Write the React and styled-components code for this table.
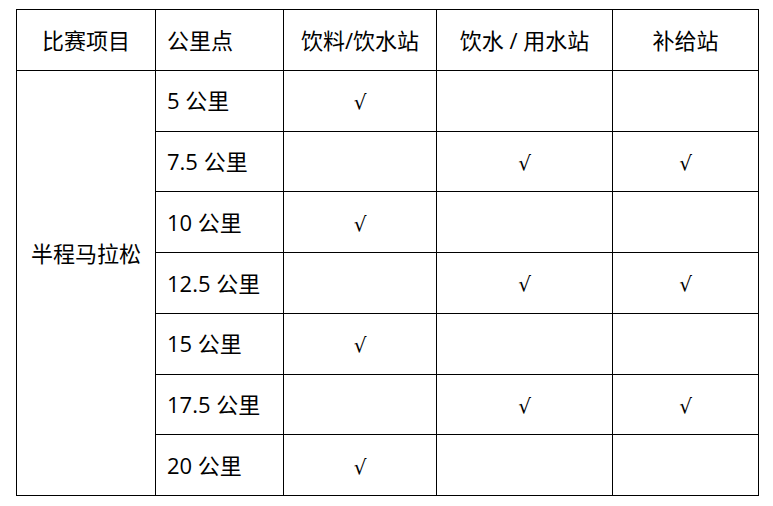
import React from 'react';
import styled, { createGlobalStyle } from 'styled-components';

const GlobalStyle = createGlobalStyle`
  html, body {
    margin: 0;
    padding: 0;
    background: #ffffff;
  }
  body {
    font-family: "Open Sans", "Noto Sans CJK SC", sans-serif;
    color: #000;
  }
`;

const Page = styled.div`
  padding: 9px 15px 0 16px;
`;

const Table = styled.table`
  border-collapse: collapse;
  width: 742px;
  table-layout: fixed;
  font-size: 22px;
`;

const Row = styled.tr`
  height: 60.75px;
`;

const Cell = styled.td`
  border: 1px solid #000;
  padding: 0 0 0 ${p => (p.$left ? '11px' : '0')};
  text-align: ${p => (p.$left ? 'left' : 'center')};
  vertical-align: middle;
  line-height: 1.2;
  font-weight: 400;
`;

const GroupCell = styled(Cell)`
  padding-bottom: 60px;
`;

const HeadCell = styled(Cell).attrs({ as: 'th' })``;

const Check = styled.span`
  font-family: "DejaVu Sans", sans-serif;
  font-size: 20px;
`;

const columns = [139, 128, 153, 176, 146];

const rows = [
  { km: '5 公里', drink: true, water: false, supply: false },
  { km: '7.5 公里', drink: false, water: true, supply: true },
  { km: '10 公里', drink: true, water: false, supply: false },
  { km: '12.5 公里', drink: false, water: true, supply: true },
  { km: '15 公里', drink: true, water: false, supply: false },
  { km: '17.5 公里', drink: false, water: true, supply: true },
  { km: '20 公里', drink: true, water: false, supply: false },
];

const mark = v => (v ? <Check>√</Check> : null);

export default function App() {
  return (
    <>
      <GlobalStyle />
      <Page>
        <Table>
          <colgroup>
            {columns.map((w, i) => (
              <col key={i} style={{ width: w }} />
            ))}
          </colgroup>
          <thead>
            <Row>
              <HeadCell>比赛项目</HeadCell>
              <HeadCell $left>公里点</HeadCell>
              <HeadCell>饮料/饮水站</HeadCell>
              <HeadCell>饮水 / 用水站</HeadCell>
              <HeadCell>补给站</HeadCell>
            </Row>
          </thead>
          <tbody>
            {rows.map((r, i) => (
              <Row key={r.km}>
                {i === 0 && <GroupCell rowSpan={rows.length}>半程马拉松</GroupCell>}
                <Cell $left>{r.km}</Cell>
                <Cell>{mark(r.drink)}</Cell>
                <Cell>{mark(r.water)}</Cell>
                <Cell>{mark(r.supply)}</Cell>
              </Row>
            ))}
          </tbody>
        </Table>
      </Page>
    </>
  );
}
